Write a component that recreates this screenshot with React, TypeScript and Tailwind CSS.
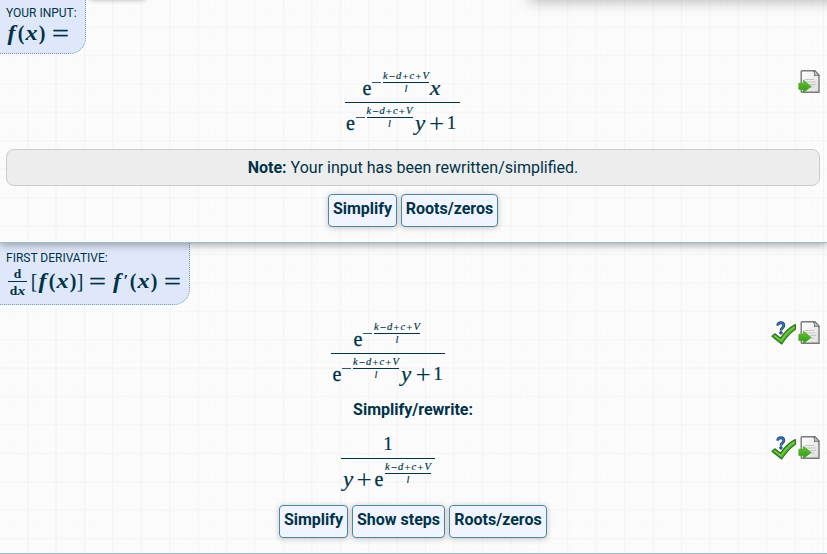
import type { ReactNode } from "react";

const serif = "font-['Liberation_Serif',serif]";

/** A single math glyph in a box of fixed advance width. */
function G({ children, className = "" }: { children: ReactNode; className?: string }) {
  return (
    <span className={`flex h-5 shrink-0 justify-center whitespace-nowrap leading-5 ${className}`}>
      {children}
    </span>
  );
}

function Equals({ className }: { className: string }) {
  return (
    <G className={`w-[19px] scale-x-125 text-[24px] font-normal [-webkit-text-stroke:0.4px_#003347] ${className}`}>=</G>
  );
}

function SmallFraction() {
  return (
    <span className="flex w-[46px] shrink-0 flex-col items-center text-[10.5px] italic leading-[10px] [-webkit-text-stroke:0.15px_#003347]">
      <span className="flex h-[11px] w-full items-start justify-between">
        <span>k</span>
        <span className="text-[11px] not-italic">−</span>
        <span>d</span>
        <span className="text-[11px] not-italic">+</span>
        <span>c</span>
        <span className="text-[11px] not-italic">+</span>
        <span>V</span>
      </span>
      <span className="h-px w-full bg-[#003347]" />
      <span className="mt-[1px] h-[10px]">l</span>
    </span>
  );
}

function ExpPower() {
  return (
    <>
      <G className="mt-[7px] w-[10px] text-[20px] [-webkit-text-stroke:0.3px_#003347]">e</G>
      <span className="mr-[2px] mt-[11px] h-px w-[9px] shrink-0 bg-[#33586a]" />
      <SmallFraction />
    </>
  );
}

function Denominator() {
  return (
    <span className="flex h-[34px] w-full items-start pl-[1px]">
      <ExpPower />
      <G className="ml-[1px] mt-[7px] w-[12px] scale-x-115 text-[20px] italic [-webkit-text-stroke:0.2px_#003347]">y</G>
      <G className="ml-[3px] mt-[8px] w-[16px] text-[27px]">+</G>
      <G className="ml-[2px] mt-[7px] w-[10px] text-[19px] [-webkit-text-stroke:0.2px_#003347]">1</G>
    </span>
  );
}

function BigFraction({ withX = false, className = "" }: { withX?: boolean; className?: string }) {
  return (
    <div className={`flex flex-col items-center text-[#003347] ${serif} ${className}`}>
      <span className={`flex h-[31px] items-start ${withX ? "pr-[1px]" : "pr-[3px]"}`}>
        <ExpPower />
        {withX && (
          <G className="mt-[7px] w-[12px] scale-x-120 text-[20px] italic [-webkit-text-stroke:0.2px_#003347]">x</G>
        )}
      </span>
      <span className="mb-[3px] h-px w-full bg-[#003347]" />
      <Denominator />
    </div>
  );
}

function SimplifiedFraction() {
  return (
    <div className={`flex w-[94px] flex-col items-center text-[#003347] ${serif}`}>
      <span className="flex h-[24px]">
        <G className="text-[19px] [-webkit-text-stroke:0.2px_#003347]">1</G>
      </span>
      <span className="mb-[3px] h-px w-full bg-[#003347]" />
      <span className="flex h-[34px] w-full items-start pl-[1px]">
        <G className="mt-[7px] w-[12px] scale-x-115 text-[20px] italic [-webkit-text-stroke:0.2px_#003347]">y</G>
        <G className="ml-[2px] mt-[8px] w-[16px] text-[27px]">+</G>
        <G className="ml-[2px] mt-[7px] w-[10px] text-[20px] [-webkit-text-stroke:0.3px_#003347]">e</G>
        <span className="ml-[1px]">
          <SmallFraction />
        </span>
      </span>
    </div>
  );
}

function PageIcon() {
  return (
    <svg width="23" height="25" viewBox="0 0 23 25" className="block">
      <defs>
        <linearGradient id="paper" x1="0" y1="0" x2="1" y2="1">
          <stop offset="0" stopColor="#ffffff" />
          <stop offset="1" stopColor="#dedfdc" />
        </linearGradient>
        <linearGradient id="arrow" x1="0" y1="0" x2="0" y2="1">
          <stop offset="0" stopColor="#62c834" />
          <stop offset="1" stopColor="#2f9410" />
        </linearGradient>
      </defs>
      <path d="M4.2 .8h12.6l4.2 4.3v17.2H4.2a1 1 0 0 1-1-1V1.8a1 1 0 0 1 1-1z" fill="url(#paper)" stroke="#777a76" strokeWidth="1.4" />
      <path d="M15.3 1.2c1.6 1.3 1.5 3.2 1 4.6 1.8-.8 3.3-.8 4.5 .2l-.3-1.5-3.2-3.3z" fill="#c2c4c1" stroke="#666966" strokeWidth="1" />
      <path d="M7 9.5h9M7 12h10.500M12 14.500h6M12 17h4" stroke="#c3c4c3" strokeWidth="1" />
      <path d="M.8 13.300h4.500v-3.200l7.900 6.400-7.900 6.100v-3.200H.8z" fill="url(#arrow)" stroke="#4ca42d" strokeWidth=".7" strokeLinejoin="round" />
    </svg>
  );
}

function CheckIcon() {
  return (
    <svg width="25" height="25" viewBox="0 0 25 25" className="block">
      <path d="M1 15.200l2.800-2.400 5.700 4.400C13.300 11.400 18.200 6.700 24.300 3.500l.3 4.600C19.300 12 14.500 17.100 10.700 23z" fill="#54b62b" stroke="#286d17" strokeWidth="1.1" strokeLinejoin="round" />
      <path d="M3.500 14.700l6.500 4.900C14 14 18.500 9.300 23.500 5.800" fill="none" stroke="#83d65c" strokeWidth="1" />
      <path d="M6.700 4.500c0-3.700 6.100-3.700 6.100.1 0 2.300-2.800 2.400-2.800 4.900" fill="none" stroke="#173d72" strokeWidth="2.800" />
      <path d="M6.700 4.500c0-3.700 6.100-3.700 6.100.1 0 2.300-2.800 2.400-2.800 4.900" fill="none" stroke="#3972b5" strokeWidth="1.500" />
      <circle cx="9.900" cy="11.800" r="1.400" fill="#2e65a5" stroke="#173d72" strokeWidth=".7" />
    </svg>
  );
}

function RowIcons() {
  return (
    <div className="flex w-[57px] gap-[2px] pl-[1px] pt-[16px]">
      <CheckIcon />
      <PageIcon />
    </div>
  );
}

function ActionButton({ children, className }: { children: ReactNode; className: string }) {
  return (
    <button className={`flex h-[33px] justify-center whitespace-nowrap rounded-[4px] border border-[#4c87a5] bg-[#f0f4ff] pt-[4px] text-[16px] font-bold leading-[20px] shadow-[0_1px_6px_rgba(0,0,0,0.22)] ${className}`}>
      {children}
    </button>
  );
}

function GridPaper() {
  return (
    <svg className="absolute inset-0 -z-10" width="827" height="554">
      <defs>
        <pattern id="grid" x="27" y="26.3" width="28.43" height="28.43" patternUnits="userSpaceOnUse">
          <path d="M5.7 0v28.43M11.4 0v28.43M17.1 0v28.43M22.8 0v28.43M0 5.7h28.43M0 11.4h28.43M0 17.1h28.43M0 22.8h28.43" stroke="#fafafa" strokeWidth="1" />
          <path d="M.6 0v28.43M0 .6h28.43" stroke="#f4f4f4" strokeWidth="1.3" />
        </pattern>
      </defs>
      <rect width="827" height="554" fill="#fcfcfc" />
      <rect width="827" height="554" fill="url(#grid)" />
    </svg>
  );
}

export default function App() {
  return (
    <main className="relative isolate h-[554px] w-[827px] overflow-hidden font-['Roboto',sans-serif] text-[#003347]">
      <GridPaper />
      <div className="absolute -top-[20px] left-[90px] h-5 w-[55px] shadow-[0_0_5px_rgba(0,0,0,0.3)]" />
      <div className="absolute -top-[20px] left-[529px] h-5 w-[330px] shadow-[0_0_16px_rgba(0,0,0,0.32)]" />

      <section className="h-[243px] border-b border-[#9cbccb] shadow-[0_2px_8px_rgba(0,0,0,0.35)]">
        <header className="relative h-[54px] w-[86px] rounded-br-[16px] border-b border-r border-dotted border-[#6c9fbe] bg-[#dfe8fa] pl-[6px] pt-[6px]">
          <h2 className="whitespace-nowrap text-[12px] leading-[14px]">YOUR INPUT:</h2>
          <div className={`flex items-start pt-[3px] font-bold ${serif}`}>
            <G className="w-[11px] scale-x-120 text-[20px] italic">f</G>
            <G className="w-[8px] text-[20px]">(</G>
            <G className="w-[13px] scale-x-120 text-[20px] italic">x</G>
            <G className="w-[8px] text-[20px]">)</G>
            <Equals className="ml-[5px]" />
          </div>
        </header>
        <div className="flex h-[95px] items-start pl-[6px]">
          <div className="flex flex-1 justify-center pt-[17px]">
            <BigFraction withX className="w-[115px]" />
          </div>
          <div className="w-[29px] pt-[16px]">
            <PageIcon />
          </div>
        </div>
        <p className="ml-[6px] mr-[7px] flex h-[37px] items-center justify-center rounded-[8px] border border-[#cbcbcb] bg-[#ededed] pt-[1px] text-[16px]">
          <span><b>Note:</b> Your input has been rewritten/simplified.</span>
        </p>
        <div className="mt-[8px] flex justify-center gap-[4px] pr-[1px]">
          <ActionButton className="w-[69px]">Simplify</ActionButton>
          <ActionButton className="w-[97px]">Roots/zeros</ActionButton>
        </div>
      </section>

      <section className="h-[311px] border-b border-[#9cbccb]">
        <header className="relative -z-[1] h-[62px] w-[190px] rounded-br-[16px] border-b border-r border-dotted border-[#6c9fbe] bg-[#dfe8fa] pl-[6px] pt-[8px]">
          <h2 className="whitespace-nowrap text-[12px] leading-[14px]">FIRST DERIVATIVE:</h2>
          <div className={`flex items-start pt-[6px] font-bold ${serif}`}>
            <span className="-mt-[3px] ml-[2px] flex w-[19px] flex-col items-center text-[13.5px] leading-[12px]">
              <span className="h-[13px]">d</span>
              <span className="h-px w-full bg-[#003347]" />
              <span className="flex pt-[3px]">d<i className="ml-[1px] scale-x-115">x</i></span>
            </span>
            <G className="ml-[4px] w-[6px] text-[20px] font-normal">[</G>
            <G className="w-[11px] scale-x-120 text-[20px] italic">f</G>
            <G className="w-[8px] text-[20px]">(</G>
            <G className="w-[13px] scale-x-120 text-[20px] italic">x</G>
            <G className="w-[8px] text-[20px]">)</G>
            <G className="w-[6px] text-[20px] font-normal">]</G>
            <Equals className="ml-[5px]" />
            <G className="ml-[4px] w-[12px] scale-x-120 text-[20px] italic">f</G>
            <G className="w-[6px] text-[17px]">′</G>
            <G className="w-[8px] text-[20px]">(</G>
            <G className="w-[13px] scale-x-120 text-[20px] italic">x</G>
            <G className="w-[8px] text-[20px]">)</G>
            <Equals className="ml-[5px]" />
          </div>
        </header>
        <div className="flex h-[95px] items-start pl-[6px]">
          <div className="flex flex-1 justify-center pt-[17px]">
            <BigFraction className="w-[114px]" />
          </div>
          <RowIcons />
        </div>
        <h3 className="pr-[1px] text-center text-[16px] font-bold leading-[20px]">Simplify/rewrite:</h3>
        <div className="flex h-[85px] items-start pl-[6px]">
          <div className="flex flex-1 justify-center pt-[14px]">
            <SimplifiedFraction />
          </div>
          <RowIcons />
        </div>
        <div className="flex justify-center gap-[4px] pr-[1px]">
          <ActionButton className="w-[69px]">Simplify</ActionButton>
          <ActionButton className="w-[93px]">Show steps</ActionButton>
          <ActionButton className="w-[98px]">Roots/zeros</ActionButton>
        </div>
      </section>
    </main>
  );
}
